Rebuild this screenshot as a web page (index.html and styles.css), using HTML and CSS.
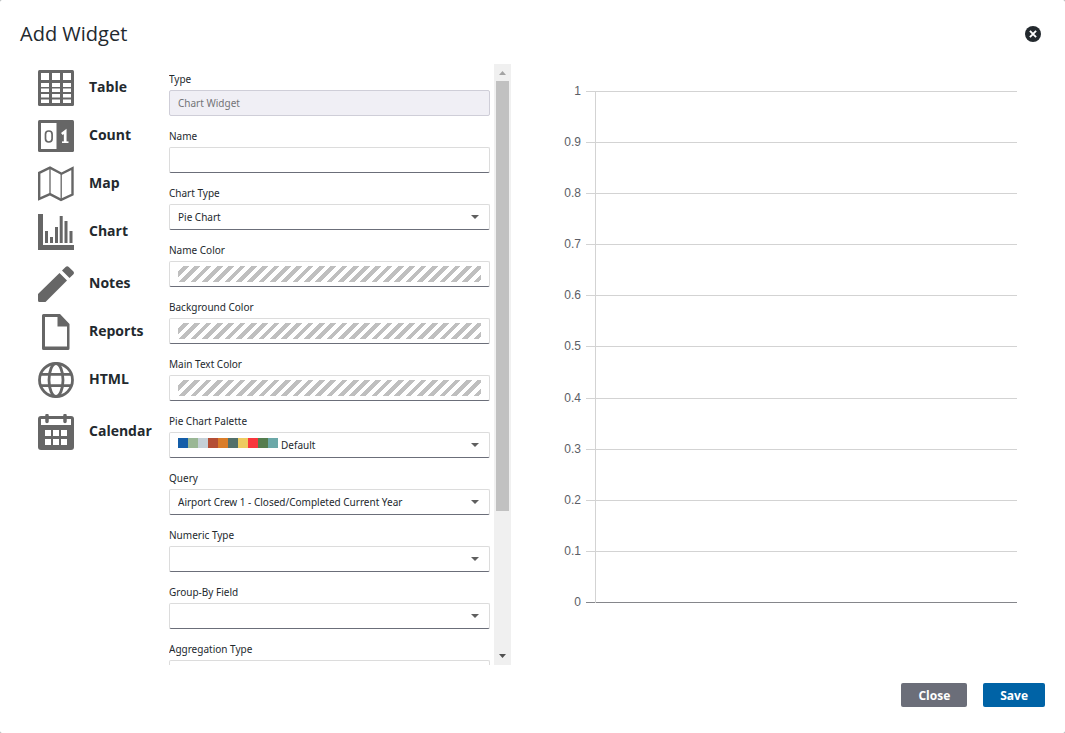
FILE: index.html
```html
<!DOCTYPE html>
<html lang="en">
<head>
<meta charset="utf-8">
<meta name="viewport" content="width=device-width, initial-scale=1">
<title>Add Widget</title>
<link rel="stylesheet" href="styles.css">
</head>
<body>
<main class="dialog" role="dialog" aria-labelledby="dialog-title">
  <header class="dialog-header">
    <h1 class="dialog-title" id="dialog-title">Add Widget</h1>
    <button class="dismiss" type="button" aria-label="Close dialog">
      <svg viewBox="0 0 16 16" width="16" height="16"><circle cx="8" cy="8" r="8" fill="#23292e"/><path d="M4.900 4.900l6.200 6.200M11.100 4.900l-6.200 6.200" stroke="#fff" stroke-width="1.900"/></svg>
    </button>
  </header>

  <div class="dialog-body">
    <nav class="types" aria-label="Widget types">
      <div class="type-group">
        <a class="type" href="#table">
          <svg class="type-icon" viewBox="0 0 36 36"><rect width="36" height="36" rx="1.5"/><path fill="#fff" d="M3 3h8v7H3zM14 3h8v7h-8zM25 3h8v7h-8zM3 13h8v4H3zM14 13h8v4h-8zM25 13h8v4h-8zM3 18.500h8v3.500H3zM14 18.500h8v3.500h-8zM25 18.500h8v3.500h-8zM3 24h8v3.500H3zM14 24h8v3.500h-8zM25 24h8v3.500h-8zM3 29.500h8V33H3zM14 29.500h8V33h-8zM25 29.500h8V33h-8z"/></svg>
          <span>Table</span>
        </a>
        <a class="type" href="#count">
          <svg class="type-icon" viewBox="0 0 36 36"><rect y="2" width="36" height="32" rx="1.5"/><path fill="#fff" d="M3 5h15.500v26H3z"/><rect x="7.500" y="13" width="6.600" height="11" rx="3.200" fill="none" stroke="#666" stroke-width="1.700"/><path d="M23.800 16l3.400-2.500V25" fill="none" stroke="#fff" stroke-width="2.700"/><path d="M24 24.200h6.500" stroke="#fff" stroke-width="1.600"/></svg>
          <span>Count</span>
        </a>
        <a class="type" href="#map">
          <svg class="type-icon" viewBox="0 0 36 36"><path d="M1.200 6.800L12 1.700l11.500 6 11-5.600v26.500l-11.500 5.200-11-5.600-10.800 4.700z" fill="none" stroke="#666" stroke-width="2.400"/><path d="M12 2v26M23.200 8v25" stroke="#666" stroke-width="1.300"/></svg>
          <span>Map</span>
        </a>
        <a class="type" href="#chart">
          <svg class="type-icon" viewBox="0 0 36 36"><path d="M0 0h5v31h31v5H0zM7 17h3v12H7zM12 23h3v6h-3zM17 13h3v16h-3zM21.700 2h3v27h-3zM26.500 7h3v22h-3zM31.500 17h3v12h-3z"/></svg>
          <span>Chart</span>
        </a>
      </div>
      <div class="type-group">
        <a class="type" href="#notes">
          <svg class="type-icon" viewBox="0 0 36 36"><path d="M0 28L21.500 7l7.500 7.500L7.500 36H1.500Q0 36 0 34.500zM24 4.500l3.600-3.600q1.600-1.500 3.200 0l4.400 4.400q1.500 1.600 0 3.200L31.500 12z"/></svg>
          <span>Notes</span>
        </a>
        <a class="type" href="#reports">
          <svg class="type-icon" viewBox="0 0 36 36"><path fill-rule="evenodd" d="M5.500 0H22l9.500 10v24.500Q31.500 36 30 36H5.500Q4 36 4 34.500v-33Q4 0 5.500 0zM7 3v29.500h22V12.500h-9.500V3z"/></svg>
          <span>Reports</span>
        </a>
        <a class="type" href="#html">
          <svg class="type-icon" viewBox="0 0 36 36"><g fill="none" stroke="#666" stroke-width="2.800"><circle cx="18" cy="18" r="16.500"/><ellipse cx="18" cy="18" rx="7" ry="16.500"/><path d="M3 12.300h30M3 23.700h30"/></g></svg>
          <span>HTML</span>
        </a>
      </div>
      <div class="type-group">
        <a class="type" href="#calendar">
          <svg class="type-icon" viewBox="0 0 36 36"><rect y="2" width="36" height="34" rx="3"/><path fill="#fff" d="M3 5h30v6H3zM7 16h6v6H7zM15 16h6v6h-6zM23 16h6v6h-6zM7 25h6v6H7zM15 25h6v6h-6zM23 25h6v6h-6z"/><path d="M9 1.500v6M27 1.500v6" stroke="#666" stroke-width="3.500" stroke-linecap="round"/></svg>
          <span>Calendar</span>
        </a>
      </div>
    </nav>

    <form class="form" id="widget-form">
      <div class="field">
        <label for="type">Type</label>
        <input class="control" id="type" type="text" value="Chart Widget" disabled>
      </div>
      <div class="field">
        <label for="name">Name</label>
        <input class="control" id="name" type="text">
      </div>
      <div class="field">
        <label for="chart-type">Chart Type</label>
        <span class="select"><select class="control" id="chart-type"><option>Pie Chart</option></select></span>
      </div>
      <div class="field">
        <label for="name-color">Name Color</label>
        <button class="control color" id="name-color" type="button"><span class="stripes"></span></button>
      </div>
      <div class="field">
        <label for="background-color">Background Color</label>
        <button class="control color" id="background-color" type="button"><span class="stripes"></span></button>
      </div>
      <div class="field">
        <label for="text-color">Main Text Color</label>
        <button class="control color" id="text-color" type="button"><span class="stripes"></span></button>
      </div>
      <div class="field">
        <label for="palette">Pie Chart Palette</label>
        <span class="select"><select class="control palette" id="palette"><option>Default</option></select></span>
      </div>
      <div class="field">
        <label for="query">Query</label>
        <span class="select"><select class="control" id="query"><option>Airport Crew 1 - Closed/Completed Current Year</option></select></span>
      </div>
      <div class="field">
        <label for="numeric-type">Numeric Type</label>
        <span class="select"><select class="control" id="numeric-type"><option></option></select></span>
      </div>
      <div class="field">
        <label for="group-by">Group-By Field</label>
        <span class="select"><select class="control" id="group-by"><option></option></select></span>
      </div>
      <div class="field">
        <label for="aggregation">Aggregation Type</label>
        <span class="select"><select class="control" id="aggregation"><option></option></select></span>
      </div>
    </form>

    <div class="scrollbar" aria-hidden="true">
      <span class="scroll-arrow"><svg viewBox="0 0 17 17"><path d="M5 11l3.500-4L12 11z" fill="#a3a3a3"/></svg></span>
      <span class="scroll-thumb"></span>
      <span class="scroll-arrow"><svg viewBox="0 0 17 17"><path d="M5 6h7l-3.500 4z" fill="#505050"/></svg></span>
    </div>

    <section class="chart" aria-label="Chart preview">
      <div class="tick">1</div>
      <div class="tick">0.9</div>
      <div class="tick">0.8</div>
      <div class="tick">0.7</div>
      <div class="tick">0.6</div>
      <div class="tick">0.5</div>
      <div class="tick">0.4</div>
      <div class="tick">0.3</div>
      <div class="tick">0.2</div>
      <div class="tick">0.1</div>
      <div class="tick">0</div>
    </section>
  </div>

  <footer class="dialog-footer">
    <button class="button" type="button">Close</button>
    <button class="button primary" type="submit" form="widget-form">Save</button>
  </footer>
</main>
</body>
</html>
```
FILE: styles.css
```css
* {
  box-sizing: border-box;
}

body {
  margin: 0;
  background: #a4a9ab;
  color: #23292e;
  font-family: "Open Sans", sans-serif;
}

button,
input,
select {
  margin: 0;
  font: inherit;
}

.dialog {
  display: flex;
  flex-direction: column;
  height: 100vh;
  border-radius: 2px;
  background: #fff;
}

.dialog-header {
  display: flex;
  align-items: center;
  justify-content: space-between;
  height: 64px;
  padding: 4px 24px 0 20px;
}

.dialog-title {
  margin: 0;
  padding-bottom: 2px;
  font-size: 20px;
  font-weight: 400;
}

.dismiss {
  display: flex;
  padding: 0;
  border: 0;
  background: none;
}

.dialog-body {
  display: flex;
  flex: 1;
  min-height: 0;
}

.types {
  display: flex;
  flex-direction: column;
  gap: 16px;
  width: 169px;
  padding: 6px 0 0 38px;
}

.type-group {
  display: flex;
  flex-direction: column;
  gap: 12px;
}

.type {
  display: flex;
  align-items: center;
  gap: 15px;
  height: 36px;
  color: inherit;
  font-size: 14px;
  font-weight: 700;
  line-height: 20px;
  text-decoration: none;
}

.type span {
  padding-bottom: 2px;
}

.type-icon {
  width: 36px;
  height: 36px;
  fill: #666;
}

.form {
  width: 325px;
  padding: 8px 4px 0 0;
  overflow-y: auto;
  scrollbar-width: none;
  font-family: "Noto Sans", "Open Sans", sans-serif;
}

.field {
  display: flex;
  flex-direction: column;
  gap: 4px;
  margin-bottom: 13px;
  font-size: 10px;
}

.field label {
  height: 14px;
  line-height: 14px;
}

.control {
  display: block;
  width: 100%;
  height: 26px;
  padding: 0 8px;
  border: 1px solid #dcdcdc;
  border-bottom-color: #6b6e79;
  border-radius: 2px;
  background: #fff;
  color: #23292e;
  appearance: none;
}

.control:disabled {
  border-color: #cfced8;
  background: #f0eff5;
  color: #737477;
}

.select {
  position: relative;
}

.select::after {
  position: absolute;
  top: 11px;
  right: 11px;
  border: 4px solid transparent;
  border-top-color: #5f5f5f;
  border-bottom: 0;
  content: "";
  pointer-events: none;
}

.color {
  padding: 4px 8px;
}

.stripes {
  display: block;
  height: 16px;
  background: repeating-linear-gradient(135deg, #fff 0 4px, #bfbfbf 4px 8px);
}

.palette {
  padding-left: 111px;
  background: linear-gradient(to right, #145da8 10%, #9ab795 10% 20%, #c5d0d7 20% 30%, #b44e35 30% 40%, #da7d29 40% 50%, #53706a 50% 60%, #eecb61 60% 70%, #f9373d 70% 80%, #557d4e 80% 90%, #6ba8a8 90%) 8px 5px / 100px 10px no-repeat #fff;
}

.scrollbar {
  display: flex;
  flex-direction: column;
  justify-content: space-between;
  width: 17px;
  background: #f0f0f0;
}

.scroll-arrow {
  display: flex;
  height: 17px;
}

.scroll-thumb {
  flex: 0 0 430px;
  margin: 0 2px auto;
  background: #c1c1c1;
}

.chart {
  position: relative;
  display: flex;
  flex: 1;
  flex-direction: column;
  justify-content: space-between;
  margin: 19px 48px 54px 50px;
  color: #5c5e66;
  font: 12px/17px "Liberation Sans", Arial, sans-serif;
}

.chart::before {
  position: absolute;
  top: 8px;
  bottom: 8px;
  left: 34px;
  border-left: 1px solid #d3d3d3;
  content: "";
}

.tick {
  display: grid;
  grid-template-columns: 20px 1fr;
  align-items: center;
  gap: 5px;
  text-align: right;
}

.tick::after {
  border-top: 1px solid #d3d3d3;
  content: "";
}

.tick:last-child::after {
  border-color: #85868b;
}

.dialog-footer {
  display: flex;
  justify-content: flex-end;
  gap: 16px;
  padding: 18px 20px 26px;
}

.button {
  height: 24px;
  padding: 0 17px;
  border: 0;
  border-radius: 2px;
  background: #6b6e79;
  color: #fff;
  font-size: 12px;
  font-weight: 700;
}

.primary {
  background: #0063a6;
}
```
